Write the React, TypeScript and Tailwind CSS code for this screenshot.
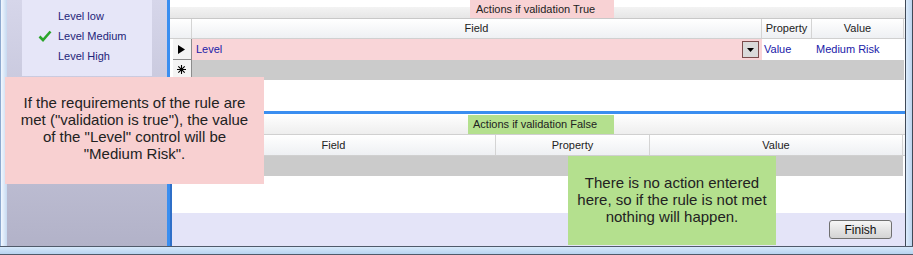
import React from "react";

const font = "font-['Liberation_Sans',Arial,sans-serif]";

function RowHeader({ children }: { children?: React.ReactNode }) {
  return (
    <div className="w-[22px] h-full flex items-center justify-center pl-[2px]">
      <div className="w-[19px] h-full bg-[#f4f4f4] border-r border-b border-[#8c8c8c] flex items-center justify-center text-black">
        {children}
      </div>
    </div>
  );
}

export default function App() {
  return (
    <div className={`relative w-[913px] h-[255px] overflow-hidden bg-[#cfe2f6] ${font} text-[11px]`}>
      <div className="flex h-[246px]">
        {/* left window frame */}
        <div className="w-[7px] h-full border-l border-[#8eaad0] bg-[linear-gradient(to_right,#f2f8ff,#c6d9f0)]" />
        {/* left panel */}
        <div className="w-[160px] h-full bg-[linear-gradient(to_bottom,#d6d6ea,#b2b2c8)] pl-[15px]">
          <div className="w-[130px] h-[76px] bg-[#e6e6f8] flex flex-col pt-[6px] text-[#1e2478]">
            <div className="h-[20px] flex items-center pl-[36px]">Level low</div>
            <div className="h-[20px] flex items-center pl-[16px]">
              <svg width="14" height="12" viewBox="0 0 14 12" className="mr-[6px]">
                <path d="M1.5 6.5 L5 10 L12.5 1.5" fill="none" stroke="#2aa52a" strokeWidth="2.6" strokeLinejoin="miter" />
              </svg>
              Level Medium
            </div>
            <div className="h-[20px] flex items-center pl-[36px]">Level High</div>
          </div>
        </div>
        {/* vertical splitter */}
        <div className="w-[3px] h-full bg-[#3a8ef0]" />
        {/* right panel */}
        <div className="w-[735px] h-full flex flex-col bg-white text-[#222]">
          {/* top section */}
          <div className="h-[111px] flex flex-col">
            <div className="h-[19px] flex bg-[linear-gradient(to_bottom,#ffffff_7px,#f3f3f3_7px,#e6e6e6)] border-b border-[#c8c8c8]">
              <div className="w-[300px]" />
              <div className="w-[144px] h-[18px] bg-[#f8d2d4] flex items-center pl-[6px]">Actions if validation True</div>
            </div>
            <div className="h-[20px] flex bg-[linear-gradient(to_bottom,#ffffff,#eef0f3)] border-b border-[#d0d0d0]">
              <div className="w-[22px] border-r border-[#d4d4d4]" />
              <div className="w-[570px] border-r border-[#d4d4d4] flex items-center justify-center">Field</div>
              <div className="w-[50px] border-r border-[#d4d4d4] flex items-center justify-center">Property</div>
              <div className="w-[92px] border-r border-[#d4d4d4] flex items-center justify-center">Value</div>
            </div>
            <div className="h-[21px] flex">
              <RowHeader>
                <svg width="7" height="9" viewBox="0 0 7 9"><path d="M0 0 L7 4.5 L0 9 Z" fill="#000" /></svg>
              </RowHeader>
              <div className="w-[570px] bg-[#f9d5d8] flex items-center justify-between pl-[4px] pr-[3px] text-[#2020a8]">
                <span>Level</span>
                <div className="w-[17px] h-[17px] border border-[#7a4c4c] bg-[#dadada] flex items-center justify-center">
                  <svg width="7" height="4" viewBox="0 0 7 4"><path d="M0 0 L7 0 L3.5 4 Z" fill="#000" /></svg>
                </div>
              </div>
              <div className="w-[50px] flex items-center pl-[2px] text-[#2020a8]">Value</div>
              <div className="w-[92px] flex items-center pl-[4px] text-[#2020a8]">Medium Risk</div>
            </div>
            <div className="h-[20px] flex">
              <RowHeader>
                <svg width="9" height="9" viewBox="0 0 9 9">
                  <path d="M4.5 0 V9 M0 4.5 H9 M1.3 1.3 L7.7 7.7 M7.7 1.3 L1.3 7.7" stroke="#000" strokeWidth="1.1" fill="none" />
                </svg>
              </RowHeader>
              <div className="w-[712px] bg-[#cbcbcb]" />
            </div>
            <div className="flex-1" />
          </div>
          {/* horizontal splitter */}
          <div className="h-[3px] bg-[#3a8ef0]" />
          {/* bottom section */}
          <div className="flex-1 flex flex-col border-l-2 border-[#2f6fc8]">
            <div className="h-[21px] flex items-end bg-[linear-gradient(to_bottom,#ffffff,#eeeeee)] border-b border-[#d0d0d0]">
              <div className="w-[296px]" />
              <div className="w-[146px] h-[19px] bg-[#b4e08e] flex items-center pl-[5px]">Actions if validation False</div>
            </div>
            <div className="h-[21px] flex bg-[linear-gradient(to_bottom,#ffffff,#eef0f3)] border-b border-[#d0d0d0]">
              <div className="w-[324px] border-r border-[#d4d4d4] flex items-center justify-center">Field</div>
              <div className="w-[154px] border-r border-[#d4d4d4] flex items-center justify-center">Property</div>
              <div className="w-[253px] border-r border-[#d4d4d4] flex items-center justify-center">Value</div>
            </div>
            <div className="h-[20px] flex">
              <div className="w-[731px] bg-[#cbcbcb]" />
            </div>
            <div className="h-[37px]" />
            <div className="flex-1 bg-[#e4e4f8] flex items-center justify-end pr-[13px]">
              <button className="w-[63px] h-[19px] rounded-[3px] border border-[#707070] bg-[linear-gradient(to_bottom,#f6f6f6,#e4e4e4_50%,#d4d4d4)] text-[12px] text-[#111] leading-none">
                Finish
              </button>
            </div>
          </div>
        </div>
        {/* right window frame */}
        <div className="w-[8px] h-full border-l border-[#9aa8b8] border-r border-[#404a58] bg-[linear-gradient(to_right,#dcecfc,#bcd4ee)]" />
      </div>
      {/* bottom window frame */}
      <div className="h-[9px] border-t border-[#505a6a] border-b border-[#2c3440] bg-[linear-gradient(to_bottom,#d6e8fa,#b8d4f0)]" />

      {/* callouts */}
      <div className="absolute left-[5px] top-[77px] w-[259px] h-[107px] bg-[#f8d0d1] text-[15px] leading-[17px] text-[#222] text-center whitespace-nowrap pt-[17px]">
        If the requirements of the rule are<br />
        met ("validation is true"), the value<br />
        of the "Level" control will be<br />
        "Medium Risk".
      </div>
      <div className="absolute left-[568px] top-[156px] w-[208px] h-[89px] bg-[#b4e08e] text-[15px] leading-[17px] text-[#222] text-center whitespace-nowrap pt-[18px]">
        There is no action entered<br />
        here, so if the rule is not met<br />
        nothing will happen.
      </div>
    </div>
  );
}
